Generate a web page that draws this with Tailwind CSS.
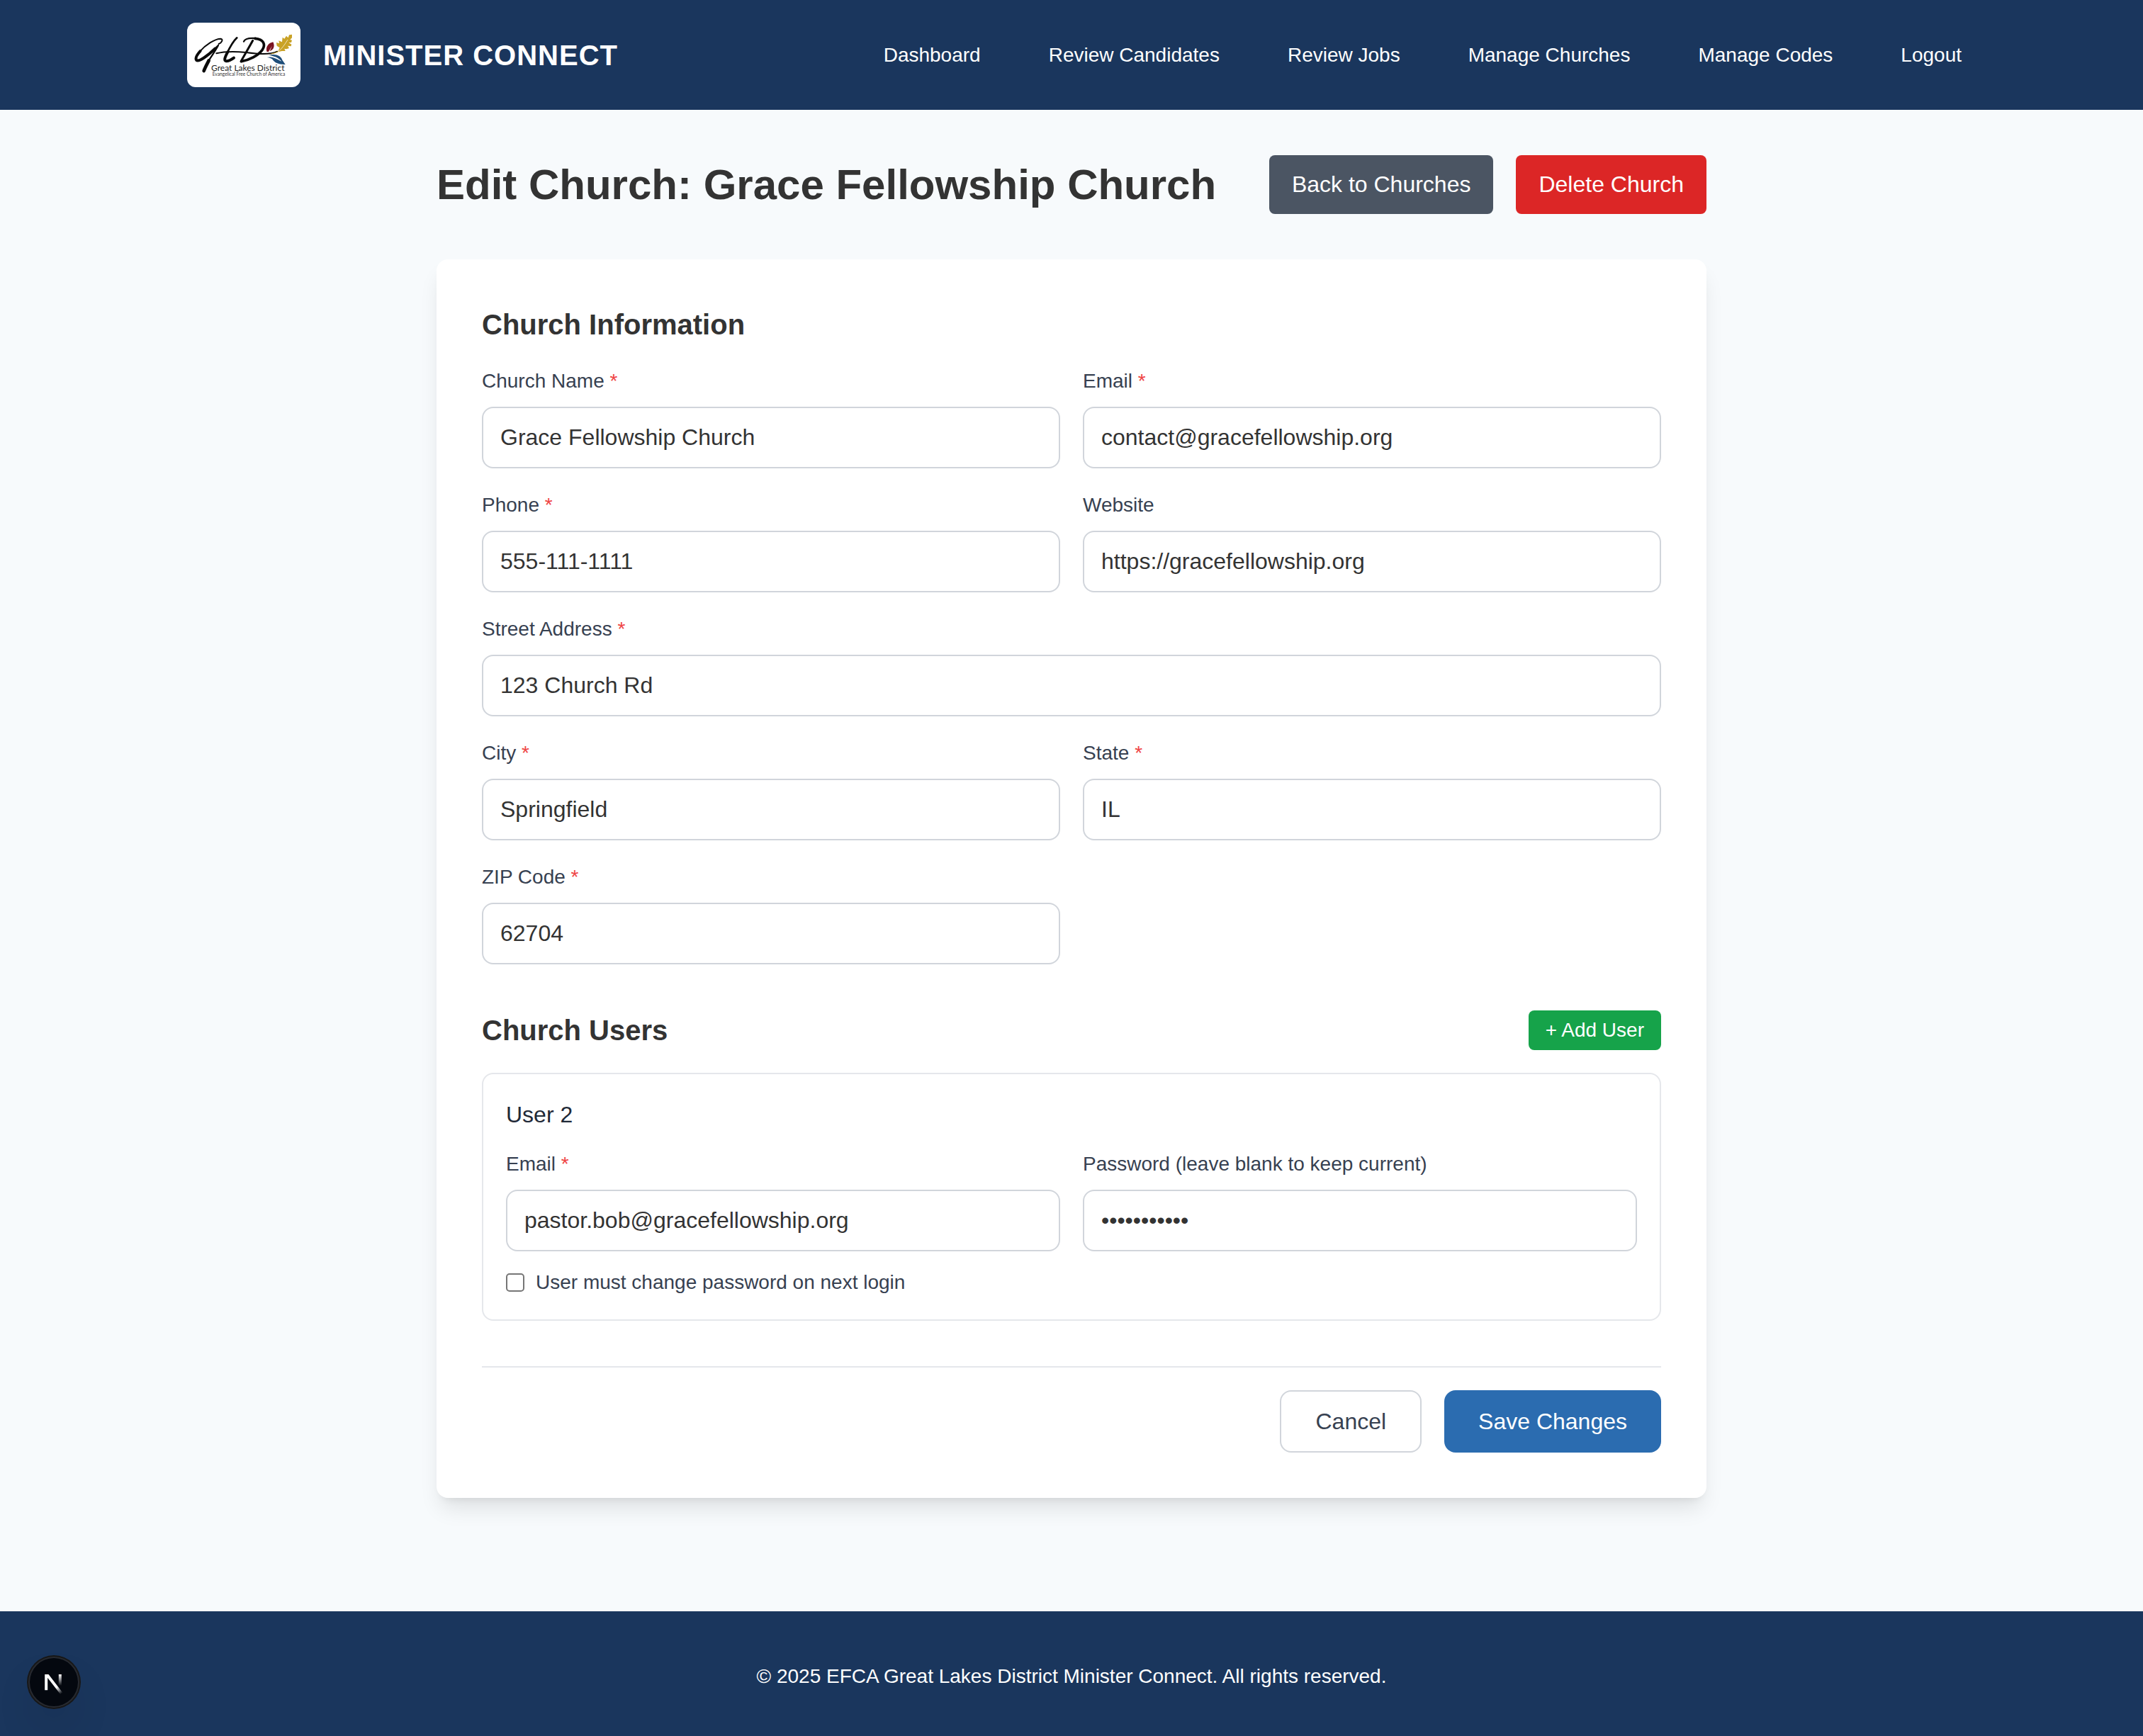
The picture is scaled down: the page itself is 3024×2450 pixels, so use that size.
<!DOCTYPE html>
<html lang="en">
<head>
<meta charset="utf-8">
<meta name="viewport" content="width=device-width, initial-scale=1">
<title>Edit Church - Minister Connect</title>
<script src="https://cdn.jsdelivr.net/npm/@tailwindcss/browser@4"></script>
</head>
<body class="flex min-h-screen flex-col bg-[#f7fafc] font-['Liberation_Sans',Arial,sans-serif] text-[32px] leading-[51px] text-[#333333]">

<header class="bg-[#1a365d] text-white">
  <div class="mx-auto flex w-full max-w-[2560px] flex-wrap items-center justify-between gap-8 py-8 pl-8 pr-6">
    <a href="#" class="flex items-center gap-8">
      <svg class="h-[91px] w-40 rounded-xl bg-white" viewBox="0 0 480 273" role="img" aria-label="Great Lakes District">
        <!-- brush lettering -->
        <g fill="none" stroke="#0a0a0a" stroke-linecap="round" stroke-linejoin="round">
          <path stroke-width="6" d="M134 90C148 84 154 70 142 68C118 68 78 94 54 122"/>
          <path stroke-width="12" d="M56 120C40 138 34 152 40 159C50 166 86 142 118 110"/>
          <path stroke-width="7" d="M116 112L132 96C116 126 96 152 84 172"/>
          <path stroke-width="14" d="M92 160C84 176 76 190 71 204"/>
          <path stroke-width="8" d="M211 64C198 76 180 106 168 132"/>
          <path stroke-width="12" d="M172 124C160 146 154 162 166 163C176 163 186 158 198 149"/>
          <path stroke-width="6" d="M124 130C164 120 212 122 250 126C296 132 348 138 382 122"/>
          <path stroke-width="9" d="M278 76C266 98 246 132 228 164"/>
          <path stroke-width="7" d="M240 80C244 68 264 64 290 66"/>
          <path stroke-width="11" d="M288 67C324 70 334 92 318 116C300 140 264 158 230 164"/>
        </g>
        <path d="M356 132C388 126 404 112 420 88" fill="none" stroke="#c9a227" stroke-width="3"/>
        <!-- gold leaf -->
        <path fill="#c9a227" d="M378 84L390 88L388 76L402 82L404 62L412 68L420 56L428 64L432 52L444 50L444 64L436 72L444 74L441 84L430 84L442 92L440 100L426 98L432 108L420 112L412 110L416 120L402 120L384 124L392 106L380 98Z"/>
        <path d="M384 124C400 112 414 92 426 72" stroke="#fff" stroke-width="2" fill="none"/>
        <!-- red bud -->
        <path fill="#7a1220" d="M337 122C332 100 346 86 364 82C372 98 368 116 350 120L360 98L344 124Z"/>
        <!-- blue leaf -->
        <path fill="#1f4e79" d="M338 147C362 140 382 156 400 164C388 148 366 140 346 138C374 130 398 140 403 158L416 177C388 178 370 170 360 154C354 150 346 147 338 147Z"/>
        <text x="102" y="204" font-family="Lato, sans-serif" font-size="36" fill="#222">Great Lakes District</text>
        <text x="107" y="225" font-family="Lato, sans-serif" font-size="20" fill="#333">Evangelical Free Church of America</text>
      </svg>
      <span class="text-[40px] font-bold leading-[56px] tracking-wide">MINISTER CONNECT</span>
    </a>
    <nav class="flex flex-wrap items-center gap-x-24 gap-y-4 text-[28px] leading-10">
      <a href="#">Dashboard</a>
      <a href="#">Review Candidates</a>
      <a href="#">Review Jobs</a>
      <a href="#">Manage Churches</a>
      <a href="#">Manage Codes</a>
      <a href="#">Logout</a>
    </nav>
  </div>
</header>

<main class="mx-auto w-full max-w-[1792px] flex-1 pb-40 pt-16">
  <div class="mb-16 flex flex-wrap items-center justify-between gap-8">
    <h1 class="text-[60px] font-bold leading-[72px]">Edit Church: Grace Fellowship Church</h1>
    <div class="flex gap-8 text-white">
      <a href="#" class="rounded-lg bg-[#4b5563] px-8 py-4">Back to Churches</a>
      <button type="button" class="rounded-lg bg-[#dc2626] px-8 py-4">Delete Church</button>
    </div>
  </div>

  <form class="rounded-2xl bg-white p-16 shadow-[0_20px_30px_-6px_rgba(0,0,0,0.1),0_8px_12px_-8px_rgba(0,0,0,0.1)]">
    <section>
      <h2 class="mb-8 text-[40px] font-bold leading-[56px]">Church Information</h2>
      <div class="grid gap-8 md:grid-cols-2">
        <div>
          <label for="name" class="mb-4 block text-[28px] leading-10 text-[#374151]">Church Name <span class="text-[#ef4444]">*</span></label>
          <input id="name" type="text" value="Grace Fellowship Church" class="block w-full rounded-2xl border-2 border-[#d1d5db] px-6 py-4">
        </div>
        <div>
          <label for="email" class="mb-4 block text-[28px] leading-10 text-[#374151]">Email <span class="text-[#ef4444]">*</span></label>
          <input id="email" type="email" value="contact@gracefellowship.org" class="block w-full rounded-2xl border-2 border-[#d1d5db] px-6 py-4">
        </div>
        <div>
          <label for="phone" class="mb-4 block text-[28px] leading-10 text-[#374151]">Phone <span class="text-[#ef4444]">*</span></label>
          <input id="phone" type="tel" value="555-111-1111" class="block w-full rounded-2xl border-2 border-[#d1d5db] px-6 py-4">
        </div>
        <div>
          <label for="website" class="mb-4 block text-[28px] leading-10 text-[#374151]">Website</label>
          <input id="website" type="url" value="https://gracefellowship.org" class="block w-full rounded-2xl border-2 border-[#d1d5db] px-6 py-4">
        </div>
        <div class="md:col-span-2">
          <label for="street" class="mb-4 block text-[28px] leading-10 text-[#374151]">Street Address <span class="text-[#ef4444]">*</span></label>
          <input id="street" type="text" value="123 Church Rd" class="block w-full rounded-2xl border-2 border-[#d1d5db] px-6 py-4">
        </div>
        <div>
          <label for="city" class="mb-4 block text-[28px] leading-10 text-[#374151]">City <span class="text-[#ef4444]">*</span></label>
          <input id="city" type="text" value="Springfield" class="block w-full rounded-2xl border-2 border-[#d1d5db] px-6 py-4">
        </div>
        <div>
          <label for="state" class="mb-4 block text-[28px] leading-10 text-[#374151]">State <span class="text-[#ef4444]">*</span></label>
          <input id="state" type="text" value="IL" class="block w-full rounded-2xl border-2 border-[#d1d5db] px-6 py-4">
        </div>
        <div>
          <label for="zip" class="mb-4 block text-[28px] leading-10 text-[#374151]">ZIP Code <span class="text-[#ef4444]">*</span></label>
          <input id="zip" type="text" value="62704" class="block w-full rounded-2xl border-2 border-[#d1d5db] px-6 py-4">
        </div>
      </div>
    </section>

    <section class="mt-[65px]">
      <div class="mb-8 flex items-center justify-between">
        <h2 class="text-[40px] font-bold leading-[56px]">Church Users</h2>
        <button type="button" class="rounded-lg bg-[#16a34a] px-6 py-2 text-[28px] leading-10 text-white">+ Add User</button>
      </div>
      <div class="rounded-2xl border-2 border-[#e5e7eb] p-8">
        <h3 class="mb-6 text-[#1f2937]">User 2</h3>
        <div class="grid gap-8 md:grid-cols-2">
          <div>
            <label for="user-email" class="mb-4 block text-[28px] leading-10 text-[#374151]">Email <span class="text-[#ef4444]">*</span></label>
            <input id="user-email" type="email" value="pastor.bob@gracefellowship.org" class="block w-full rounded-2xl border-2 border-[#d1d5db] px-6 py-4">
          </div>
          <div>
            <label for="user-password" class="mb-4 block text-[28px] leading-10 text-[#374151]">Password (leave blank to keep current)</label>
            <input id="user-password" type="password" value="password123" class="block w-full rounded-2xl border-2 border-[#d1d5db] px-6 py-4">
          </div>
        </div>
        <div class="mt-6 flex items-center gap-4">
          <input id="must-change" type="checkbox" class="size-[26px] appearance-none rounded-[5px] border-2 border-[#767676] bg-white checked:bg-[#2b6cb0]">
          <label for="must-change" class="text-[28px] leading-10 text-[#374151]">User must change password on next login</label>
        </div>
      </div>
    </section>

    <div class="mt-16 flex justify-end gap-8 border-t-2 border-[#e5e7eb] pt-8 leading-[52px]">
      <button type="button" class="rounded-2xl border-2 border-[#d1d5db] px-12 py-4 text-[#374151]">Cancel</button>
      <button type="submit" class="rounded-2xl bg-[#2b6cb0] px-12 py-4 text-white">Save Changes</button>
    </div>
  </form>
</main>

<footer class="bg-[#1a365d] px-8 pb-16 pt-[72px] text-center text-[28px] leading-10 text-white">
  <p>© 2025 EFCA Great Lakes District Minister Connect. All rights reserved.</p>
</footer>

<button type="button" aria-label="Open developer tools" class="fixed bottom-10 left-10 size-[72px] rounded-full bg-[#04080f] shadow-[0_0_0_2px_#171717,inset_0_0_0_2px_rgba(255,255,255,0.14),0_32px_64px_-16px_rgba(0,0,0,0.24)]">
  <svg class="size-[72px]" viewBox="0 0 72 72" fill="none" aria-hidden="true">
    <defs>
      <linearGradient id="fade-diagonal" gradientUnits="userSpaceOnUse" x1="40" y1="43" x2="47" y2="52"><stop stop-color="#fff"/><stop offset="1" stop-color="#fff" stop-opacity="0"/></linearGradient>
      <linearGradient id="fade-bar" gradientUnits="userSpaceOnUse" x1="44" y1="25" x2="44" y2="41"><stop stop-color="#fff"/><stop offset="1" stop-color="#fff" stop-opacity="0"/></linearGradient>
      <clipPath id="mark-clip"><path d="M0 25H72V72H0Z"/></clipPath>
    </defs>
    <g clip-path="url(#mark-clip)">
      <path d="M47.1 52.4L25.2 24V47.2" stroke="url(#fade-diagonal)" stroke-width="4"/>
      <path d="M42.8 25H46.8V42H42.8Z" fill="url(#fade-bar)"/>
    </g>
  </svg>
</button>
</body>
</html>
